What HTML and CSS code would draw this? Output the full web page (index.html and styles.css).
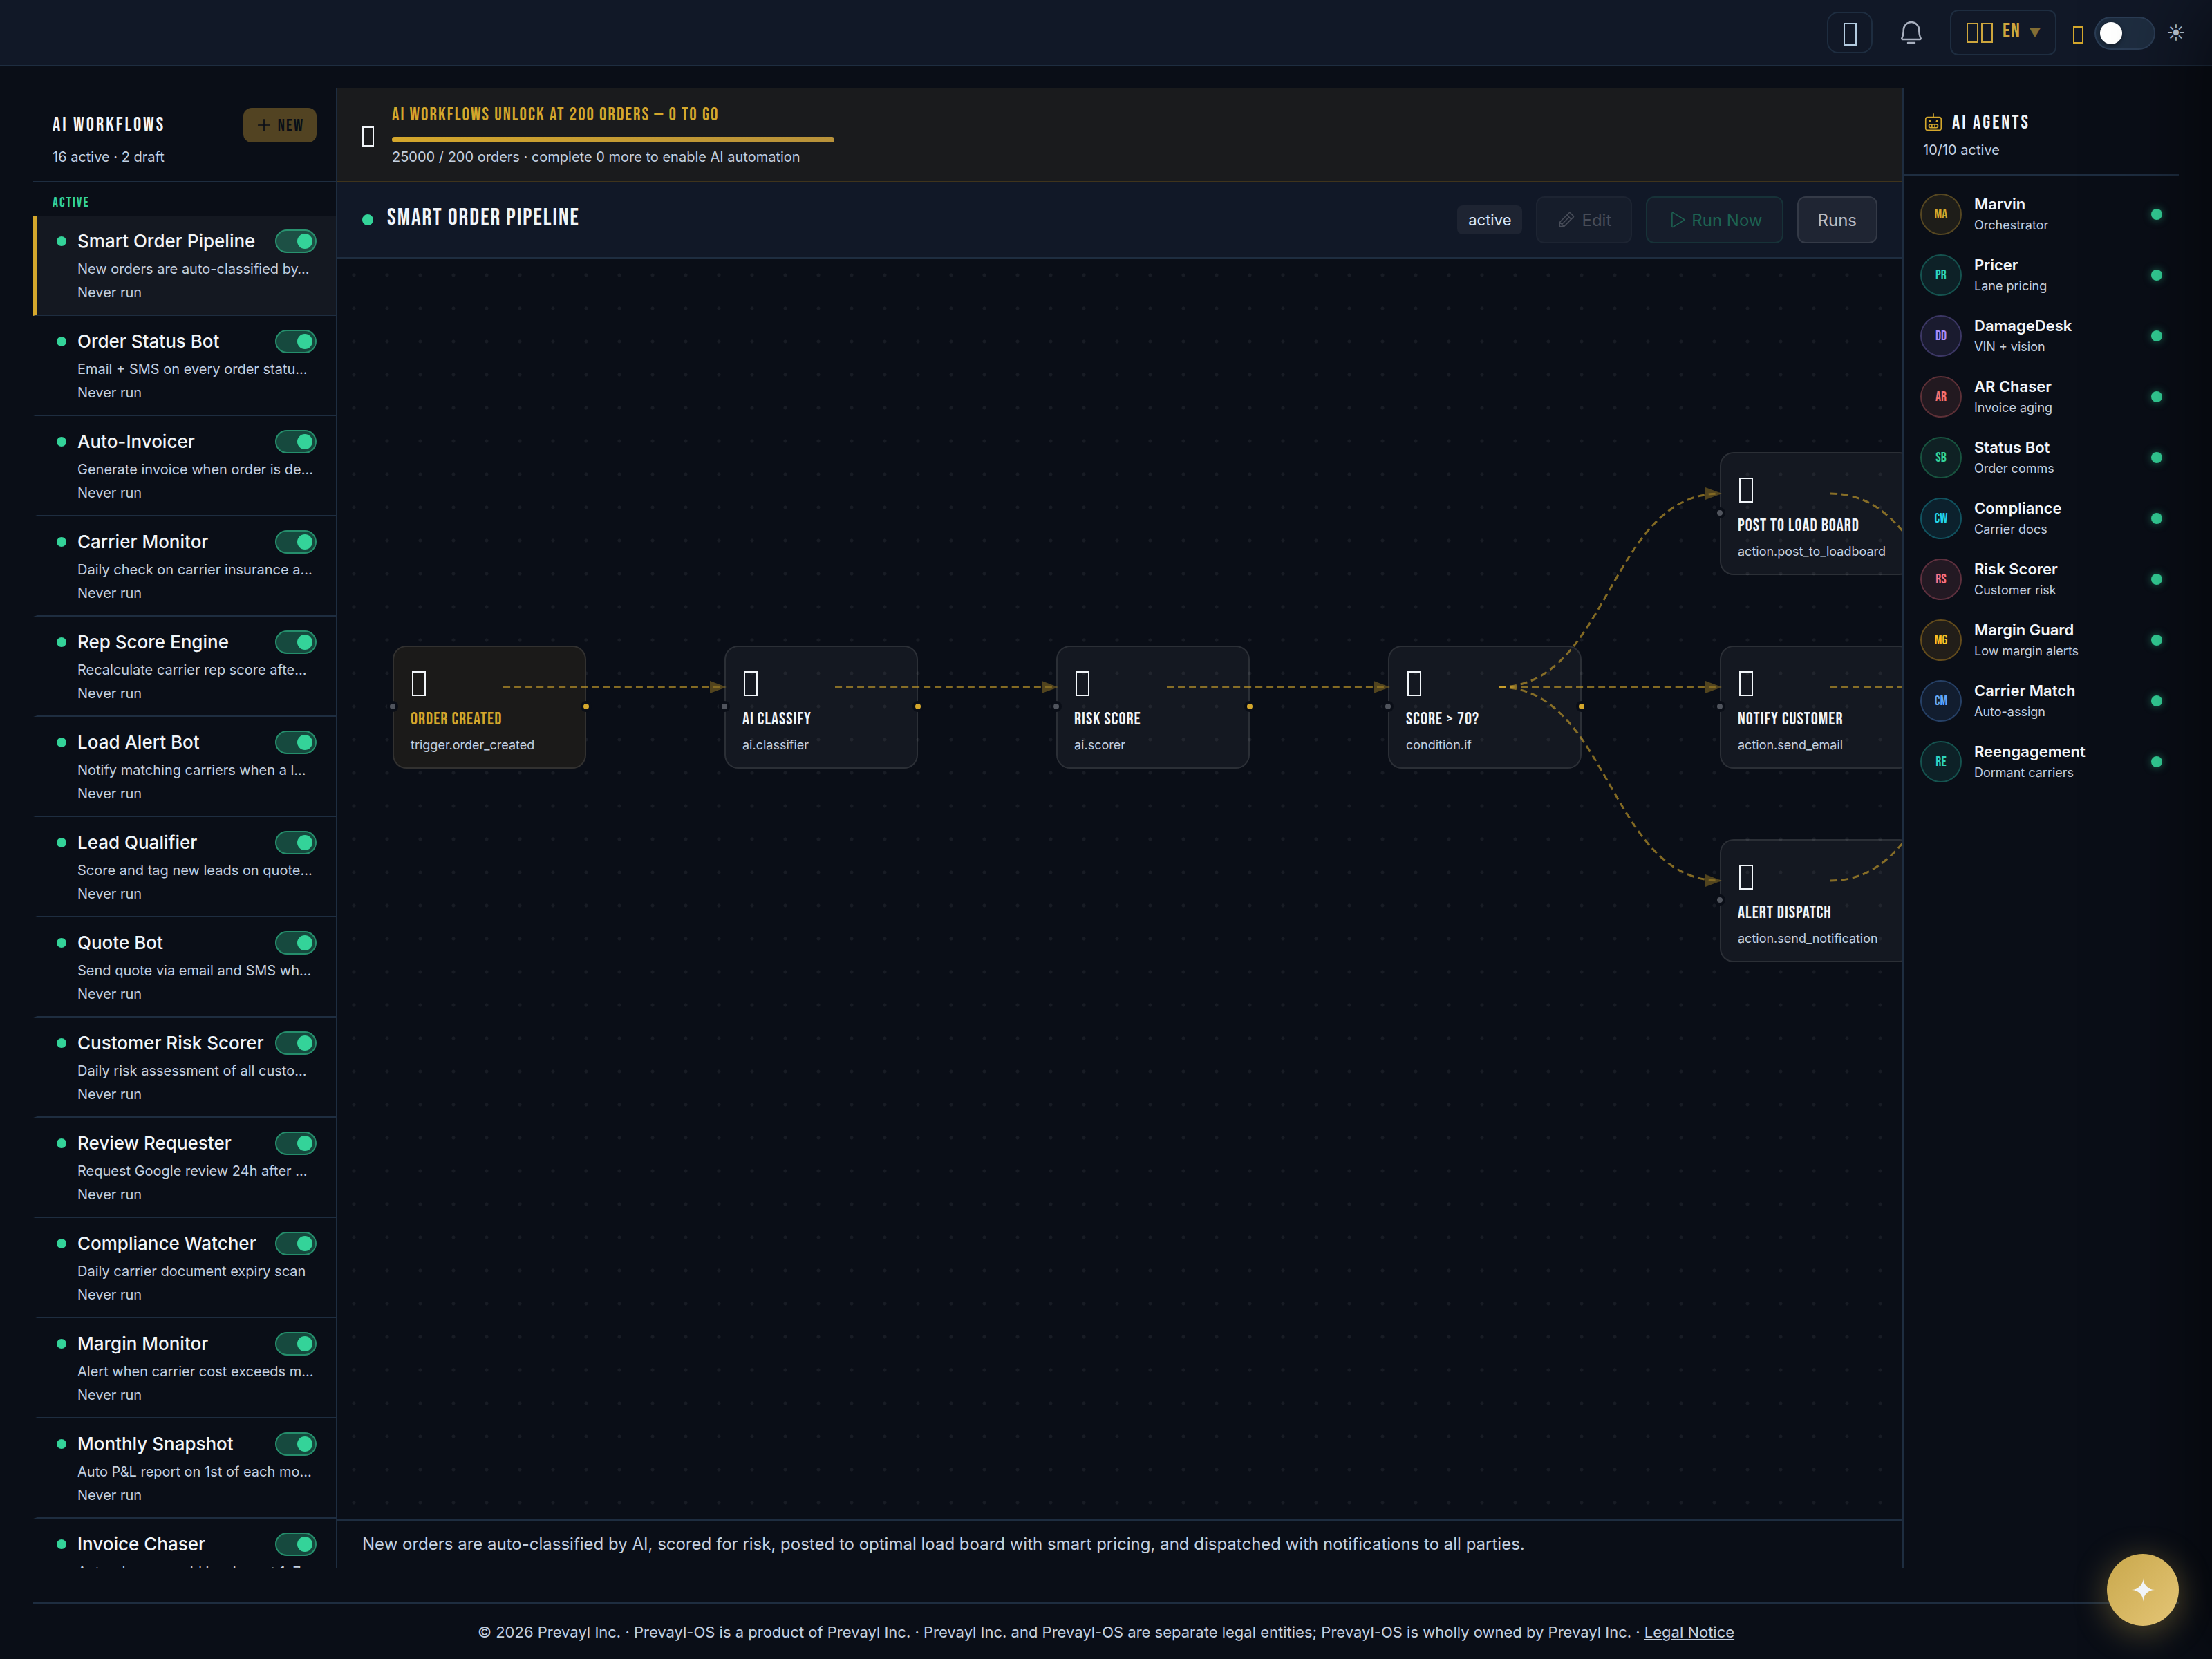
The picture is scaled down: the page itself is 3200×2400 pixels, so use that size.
FILE: index.html
```
<!DOCTYPE html>
<html lang="en">
<head>
<meta charset="UTF-8" />
<meta name="viewport" content="width=device-width, initial-scale=1.0" />
<title>AI Workflows</title>
<link rel="stylesheet" href="styles.css">
</head>
<body>

<header class="topbar">
<button class="icon-btn framed" aria-label="Messages"><span class="glyph glyph-lg"></span></button>
<button class="icon-btn bell" aria-label="Notifications">
<svg width="40" height="40" viewBox="0 0 256 256" fill="currentColor"><path d="M168,224a8,8,0,0,1-8,8H96a8,8,0,1,1,0-16h64A8,8,0,0,1,168,224Zm53.85-32A15.8,15.8,0,0,1,208,200H48a16,16,0,0,1-13.8-24.06C39.75,166.38,48,139.34,48,104a80,80,0,1,1,160,0c0,35.33,8.26,62.38,13.81,71.94A15.89,15.89,0,0,1,221.84,192ZM208,184c-7.73-13.27-16-43.95-16-80a64,64,0,1,0-128,0c0,36.06-8.28,66.74-16,80Z"/></svg>
</button>
<button class="lang">
<span class="flag"><span class="glyph"></span><span class="glyph"></span></span>
<span class="lang-code">EN</span>
<span class="caret">▼</span>
</button>
<label class="theme">
<span class="glyph glyph-sm"></span>
<input type="checkbox" class="theme-switch" aria-label="Light theme">
<span class="sun">☀</span>
</label>
</header>

<main class="shell">

<aside class="flows">
<div class="flows-head">
<div class="flows-title">
<h2>AI Workflows</h2>
<button class="btn-new" disabled>
<svg width="24" height="24" viewBox="0 0 256 256" fill="none" stroke="currentColor" stroke-width="18" stroke-linecap="round"><path d="M40 128H216M128 40V216"/></svg>
New
</button>
</div>
<p class="sub">16 active · 2 draft</p>
</div>
<div class="group-label">Active</div>
<ul class="flow-list">
<li class="flow selected">
<div class="flow-row"><i class="dot"></i><label for="f1">Smart Order Pipeline</label><input type="checkbox" class="switch" id="f1" checked></div>
<p class="desc">New orders are auto-classified by…</p>
<p class="last">Never run</p>
</li>
<li class="flow">
<div class="flow-row"><i class="dot"></i><label for="f2">Order Status Bot</label><input type="checkbox" class="switch" id="f2" checked></div>
<p class="desc">Email + SMS on every order statu…</p>
<p class="last">Never run</p>
</li>
<li class="flow">
<div class="flow-row"><i class="dot"></i><label for="f3">Auto-Invoicer</label><input type="checkbox" class="switch" id="f3" checked></div>
<p class="desc">Generate invoice when order is de…</p>
<p class="last">Never run</p>
</li>
<li class="flow">
<div class="flow-row"><i class="dot"></i><label for="f4">Carrier Monitor</label><input type="checkbox" class="switch" id="f4" checked></div>
<p class="desc">Daily check on carrier insurance a…</p>
<p class="last">Never run</p>
</li>
<li class="flow">
<div class="flow-row"><i class="dot"></i><label for="f5">Rep Score Engine</label><input type="checkbox" class="switch" id="f5" checked></div>
<p class="desc">Recalculate carrier rep score afte…</p>
<p class="last">Never run</p>
</li>
<li class="flow">
<div class="flow-row"><i class="dot"></i><label for="f6">Load Alert Bot</label><input type="checkbox" class="switch" id="f6" checked></div>
<p class="desc">Notify matching carriers when a l…</p>
<p class="last">Never run</p>
</li>
<li class="flow">
<div class="flow-row"><i class="dot"></i><label for="f7">Lead Qualifier</label><input type="checkbox" class="switch" id="f7" checked></div>
<p class="desc">Score and tag new leads on quote…</p>
<p class="last">Never run</p>
</li>
<li class="flow">
<div class="flow-row"><i class="dot"></i><label for="f8">Quote Bot</label><input type="checkbox" class="switch" id="f8" checked></div>
<p class="desc">Send quote via email and SMS wh…</p>
<p class="last">Never run</p>
</li>
<li class="flow">
<div class="flow-row"><i class="dot"></i><label for="f9">Customer Risk Scorer</label><input type="checkbox" class="switch" id="f9" checked></div>
<p class="desc">Daily risk assessment of all custo…</p>
<p class="last">Never run</p>
</li>
<li class="flow">
<div class="flow-row"><i class="dot"></i><label for="f10">Review Requester</label><input type="checkbox" class="switch" id="f10" checked></div>
<p class="desc">Request Google review 24h after …</p>
<p class="last">Never run</p>
</li>
<li class="flow">
<div class="flow-row"><i class="dot"></i><label for="f11">Compliance Watcher</label><input type="checkbox" class="switch" id="f11" checked></div>
<p class="desc">Daily carrier document expiry scan</p>
<p class="last">Never run</p>
</li>
<li class="flow">
<div class="flow-row"><i class="dot"></i><label for="f12">Margin Monitor</label><input type="checkbox" class="switch" id="f12" checked></div>
<p class="desc">Alert when carrier cost exceeds m…</p>
<p class="last">Never run</p>
</li>
<li class="flow">
<div class="flow-row"><i class="dot"></i><label for="f13">Monthly Snapshot</label><input type="checkbox" class="switch" id="f13" checked></div>
<p class="desc">Auto P&amp;L report on 1st of each mo…</p>
<p class="last">Never run</p>
</li>
<li class="flow">
<div class="flow-row"><i class="dot"></i><label for="f14">Invoice Chaser</label><input type="checkbox" class="switch" id="f14" checked></div>
<p class="desc">Auto-chase unpaid invoices at 1, 7…</p>
<p class="last">Never run</p>
</li>
</ul>
</aside>

<section class="center">
<div class="unlock">
<span class="glyph"></span>
<div class="unlock-body">
<h3>AI Workflows unlock at 200 orders — 0 to go</h3>
<div class="bar"><div class="bar-fill"></div></div>
<p class="sub">25000 / 200 orders · complete 0 more to enable AI automation</p>
</div>
</div>

<div class="toolbar">
<i class="dot dot-lg"></i>
<h1>Smart Order Pipeline</h1>
<span class="badge">active</span>
<button class="btn" disabled>
<svg width="28" height="28" viewBox="0 0 256 256" fill="none" stroke="currentColor" stroke-width="14" stroke-linecap="round" stroke-linejoin="round"><path d="M92.7 216H48a8 8 0 0 1-8-8V163.3a8 8 0 0 1 2.3-5.6L165.7 34.3a8 8 0 0 1 11.3 0L221.7 79a8 8 0 0 1 0 11.3L98.3 213.7A8 8 0 0 1 92.7 216ZM136 64l56 56M164 92L68 188M95.5 215.5L40.5 160.5"/></svg>
Edit
</button>
<button class="btn btn-run" disabled>
<svg width="28" height="28" viewBox="0 0 256 256" fill="none" stroke="currentColor" stroke-width="14" stroke-linejoin="round"><path d="M72 39.9V216.1a8 8 0 0 0 12.2 6.7l144-88.1a7.8 7.8 0 0 0 0-13.4L84.2 33.2A8 8 0 0 0 72 39.9Z"/></svg>
Run Now
</button>
<button class="btn">Runs</button>
</div>

<div class="canvas">
<svg class="wires" width="2800" height="1200" viewBox="0 0 2800 1200">
<defs>
<marker id="arrow" markerWidth="8" markerHeight="6" refX="7" refY="3" orient="auto"><path d="M0 0L8 3L0 6Z"/></marker>
</defs>
<path class="wire" d="M240 620C400 620 400 620 560 620"/>
<path class="wire" d="M720 620C880 620 880 620 1040 620"/>
<path class="wire" d="M1200 620C1360 620 1360 620 1520 620"/>
<path class="wire" d="M1680 620C1840 620 1840 340 2000 340"/>
<path class="wire" d="M1680 620C1840 620 1840 620 2000 620"/>
<path class="wire" d="M1680 620C1840 620 1840 900 2000 900"/>
<path class="wire" d="M2160 340C2320 340 2320 620 2480 620"/>
<path class="wire" d="M2160 620C2320 620 2320 620 2480 620"/>
<path class="wire" d="M2160 900C2320 900 2320 620 2480 620"/>
</svg>
<div class="node trigger n1"><span class="glyph glyph-node"></span><h4>Order Created</h4><p>trigger.order_created</p></div>
<div class="node n2"><span class="glyph glyph-node"></span><h4>AI Classify</h4><p>ai.classifier</p></div>
<div class="node n3"><span class="glyph glyph-node"></span><h4>Risk Score</h4><p>ai.scorer</p></div>
<div class="node n4"><span class="glyph glyph-node"></span><h4>Score &gt; 70?</h4><p>condition.if</p></div>
<div class="node n5"><span class="glyph glyph-node"></span><h4>Post to Load Board</h4><p>action.post_to_loadboard</p></div>
<div class="node n6"><span class="glyph glyph-node"></span><h4>Notify Customer</h4><p>action.send_email</p></div>
<div class="node n7"><span class="glyph glyph-node"></span><h4>Alert Dispatch</h4><p>action.send_notification</p></div>
</div>

<p class="summary">New orders are auto-classified by AI, scored for risk, posted to optimal load board with smart pricing, and dispatched with notifications to all parties.</p>
</section>

<aside class="agents">
<div class="agents-head">
<h2>
<svg width="30" height="30" viewBox="0 0 256 256" fill="none" stroke="#d4a72c" stroke-width="14"><rect x="32" y="56" width="192" height="160" rx="24"/><rect x="72" y="144" width="112" height="42" rx="21"/><path d="M128 56V10M110 144V186M146 144V186"/><circle cx="84" cy="106" r="7"/><circle cx="172" cy="106" r="7"/></svg>
AI Agents
</h2>
<p class="sub">10/10 active</p>
</div>
<ul class="agent-list">
<li class="agent"><span class="avatar gold">MA</span><div class="who"><b>Marvin</b><span>Orchestrator</span></div><i class="dot live"></i></li>
<li class="agent"><span class="avatar teal">PR</span><div class="who"><b>Pricer</b><span>Lane pricing</span></div><i class="dot live"></i></li>
<li class="agent"><span class="avatar violet">DD</span><div class="who"><b>DamageDesk</b><span>VIN + vision</span></div><i class="dot live"></i></li>
<li class="agent"><span class="avatar red">AR</span><div class="who"><b>AR Chaser</b><span>Invoice aging</span></div><i class="dot live"></i></li>
<li class="agent"><span class="avatar green">SB</span><div class="who"><b>Status Bot</b><span>Order comms</span></div><i class="dot live"></i></li>
<li class="agent"><span class="avatar cyan">CW</span><div class="who"><b>Compliance</b><span>Carrier docs</span></div><i class="dot live"></i></li>
<li class="agent"><span class="avatar rose">RS</span><div class="who"><b>Risk Scorer</b><span>Customer risk</span></div><i class="dot live"></i></li>
<li class="agent"><span class="avatar amber">MG</span><div class="who"><b>Margin Guard</b><span>Low margin alerts</span></div><i class="dot live"></i></li>
<li class="agent"><span class="avatar blue">CM</span><div class="who"><b>Carrier Match</b><span>Auto-assign</span></div><i class="dot live"></i></li>
<li class="agent"><span class="avatar teal">RE</span><div class="who"><b>Reengagement</b><span>Dormant carriers</span></div><i class="dot live"></i></li>
</ul>
</aside>

</main>

<footer class="footer">© 2026 Prevayl Inc. · Prevayl-OS is a product of Prevayl Inc. · Prevayl Inc. and Prevayl-OS are separate legal entities; Prevayl-OS is wholly owned by Prevayl Inc. · <a href="#">Legal Notice</a></footer>

<div class="drawer"></div>
<button class="fab" aria-label="Assistant">✦</button>

</body>
</html>
```
FILE: styles.css
```
:root {
--bg: #0a0e17;
--panel: #111827;
--line: #1e2d40;
--gold: #d4a72c;
--green: #34d399;
--text: #f1f5f9;
--muted: #c3d0e0;
--display: 'Bebas Neue', 'Oswald', sans-serif;
}

*, *::before, *::after { box-sizing: border-box; }
* { margin: 0; padding: 0; }

html, body { height: 100%; }

body {
display: flex; flex-direction: column;
overflow: hidden;
background: var(--bg); color: var(--text);
font-family: 'Inter', sans-serif;
font-size: 20px; line-height: 34px;
}

button { font-family: inherit; cursor: pointer; }
ul { list-style: none; }

h1, h2, h3, h4 {
font-family: var(--display);
font-weight: 400; text-transform: uppercase;
}

h2 { font-size: 28px; line-height: 44px; letter-spacing: 3px; }

.sub { color: var(--muted); }

/* empty box glyphs */
.glyph {
display: inline-block; flex: none;
width: 17px; height: 29px;
border: 2px solid currentColor;
}
.glyph-lg { width: 19px; height: 33px; }
.glyph-sm { width: 15px; height: 25px; color: var(--gold); }
.glyph-node { width: 20px; height: 36px; }

.dot {
flex: none;
width: 14px; height: 14px; border-radius: 50%;
background: var(--green);
}
.dot-lg { width: 16px; height: 16px; }

/* top bar */
.topbar {
display: flex; align-items: center; justify-content: flex-end;
gap: 16px; height: 96px; padding: 0 40px; flex: none;
background: var(--panel);
border-bottom: 2px solid var(--line);
}

.icon-btn {
display: flex; align-items: center; justify-content: center;
width: 66px; height: 60px;
background: none; border: none; color: #a9b0bf;
}
.icon-btn.framed {
border: 2px solid var(--line); border-radius: 16px;
color: #b3cbe0; padding-top: 4px;
}
.icon-btn.bell { width: 80px; }

.lang {
display: flex; align-items: center; gap: 14px;
height: 66px; padding: 0 22px;
background: none; color: #cda63d;
border: 2px solid var(--line); border-radius: 12px;
}
.flag { display: flex; gap: 4px; }
.lang-code { font: 30px var(--display); letter-spacing: 1px; margin-bottom: 4px; }
.caret { font-size: 18px; opacity: 0.6; margin: 0 -2px; }

.theme { display: flex; align-items: center; gap: 16px; padding: 2px 0 0 8px; }
.theme .glyph { margin-top: 4px; }

.theme-switch {
appearance: none; display: flex; align-items: center;
width: 88px; height: 48px; padding: 0 6px;
background: var(--line); border: 2px solid #2b3d55; border-radius: 24px;
}
.theme-switch::before {
content: ""; width: 32px; height: 32px; border-radius: 50%;
background: #fff; box-shadow: 0 2px 6px rgba(0,0,0,0.4);
}
.sun { width: 26px; font-size: 26px; color: var(--muted); text-align: center; }

/* page grid */
.shell {
flex: 1; min-height: 0;
display: grid; grid-template-columns: 440px 1fr 400px;
grid-template-rows: 100%;
margin: 32px 48px 50px;
}

/* left list */
.flows {
display: flex; flex-direction: column;
border-right: 2px solid var(--line); overflow: hidden;
}
.flows-head { padding: 28px 28px 18px; border-bottom: 2px solid var(--line); }
.flows-title { display: flex; align-items: center; justify-content: space-between; margin-bottom: 4px; }

.btn-new {
display: flex; align-items: center; gap: 8px;
height: 50px; padding: 0 18px;
font: 24px var(--display); letter-spacing: 2px; text-transform: uppercase;
color: var(--bg); background: #524322;
border: none; border-radius: 12px;
}

.group-label {
height: 48px; padding: 0 28px; flex: none;
font: 20px/58px var(--display); letter-spacing: 2px; text-transform: uppercase;
color: var(--green);
}

.flow {
height: 145px; padding: 20px 28px 0;
border-left: 6px solid transparent;
border-bottom: 2px solid var(--line);
}
.flow.selected { background: #141821; border-left-color: var(--gold); }
.flow-row { display: flex; align-items: center; gap: 16px; margin-bottom: 6px; }
.flow-row label { flex: 1; font-size: 26px; font-weight: 500; white-space: nowrap; }
.desc, .last { padding-left: 30px; color: var(--muted); }
.desc { white-space: nowrap; }

.switch {
appearance: none; flex: none;
display: flex; align-items: center; justify-content: flex-end;
width: 60px; height: 34px; padding: 0 4px;
background: rgba(52,211,153,0.3);
border: 2px solid rgba(52,211,153,0.5); border-radius: 17px;
}
.switch::before {
content: ""; width: 22px; height: 22px; border-radius: 50%;
background: var(--green);
}

/* center */
.center { display: flex; flex-direction: column; min-width: 0; }

.unlock {
display: flex; align-items: center; gap: 26px;
padding: 16px 36px 18px;
background: #1a1b1d; border-bottom: 2px solid #3f341c;
}
.unlock .glyph { margin-top: 6px; }
.unlock h3 { font-size: 26px; line-height: 46px; letter-spacing: 2px; color: var(--gold); }
.bar { width: 640px; margin: 8px 0 4px; height: 8px; border-radius: 4px; background: #2b2c2f; }
.bar-fill { width: 100%; height: 8px; border-radius: 4px; background: linear-gradient(90deg, #d4a72c, #b8923a); }

.toolbar {
display: flex; align-items: center; gap: 20px;
padding: 20px 36px;
background: var(--panel); border-bottom: 2px solid var(--line);
}
.toolbar h1 { flex: 1; padding-bottom: 6px; font-size: 34px; line-height: 56px; letter-spacing: 2px; }

.badge { padding: 4px 16px; background: #1e2432; border-radius: 8px; font-size: 22px; color: #dbeafe; }

.btn {
display: flex; align-items: center; gap: 8px;
height: 68px; padding: 0 28px;
font-size: 24px; color: #b9bcc3;
background: #1f2533; border: 2px solid #343a47; border-radius: 12px;
}
.btn:disabled { color: #484d59; background: #161d2b; border-color: #1d2432; }
.btn-run:disabled { color: #1d6252; border-color: #173238; }

.canvas {
position: relative; flex: 1; overflow: hidden;
background-image: radial-gradient(circle, rgba(255,255,255,0.06) 2px, transparent 3px);
background-size: 48px 48px;
}

.wires { position: absolute; top: 0; left: 0; z-index: 1; }
.wire {
fill: none; stroke: var(--gold); stroke-width: 3;
stroke-dasharray: 10 6; opacity: 0.6;
marker-end: url(#arrow);
}
.wires marker path { fill: rgba(212,167,44,0.6); }

.node {
position: absolute;
width: 280px; height: 178px; padding: 35px 24px 0;
background: rgba(255,255,255,0.045);
border: 2px solid rgba(255,255,255,0.1); border-radius: 20px;
}
.node .glyph { display: block; margin: 0 2px 16px; }
.node h4 { font-size: 25px; line-height: 36px; letter-spacing: 1px; white-space: nowrap; }
.node p { font-size: 18px; line-height: 38px; color: var(--muted); }
.node.trigger { background: #1b1a19; }
.node.trigger h4 { color: var(--gold); }

/* connection ports */
.node::before, .node::after {
content: ""; position: absolute; top: 78px;
width: 16px; height: 16px; border-radius: 50%;
border: 4px solid var(--bg);
}
.node::before { left: -10px; background: #50545d; }
.node::after { right: -10px; background: var(--gold); }

.n1 { left: 80px; top: 560px; }
.n2 { left: 560px; top: 560px; }
.n3 { left: 1040px; top: 560px; }
.n4 { left: 1520px; top: 560px; }
.n5 { left: 2000px; top: 280px; }
.n6 { left: 2000px; top: 560px; }
.n7 { left: 2000px; top: 840px; }

.summary {
padding: 17px 36px;
border-top: 2px solid var(--line);
font-size: 24px; color: var(--muted);
}

/* right list */
.agents { border-left: 2px solid var(--line); }
.agents-head { padding: 28px 28px 18px; border-bottom: 2px solid var(--line); }
.agents-head h2 { display: flex; align-items: center; gap: 12px; }
.agent-list { padding: 12px 0; }

.agent { display: flex; align-items: center; gap: 18px; height: 88px; padding: 0 24px; }
.avatar {
display: flex; align-items: center; justify-content: center;
width: 60px; height: 60px; border-radius: 50%;
font: 20px var(--display);
border: 2px solid;
}
.gold { color: #d4a72c; background: #1e1d19; border-color: #564721; }
.teal { color: #2dd4bf; background: #0d2127; border-color: #15534f; }
.violet { color: #a78bfa; background: #1a1b2f; border-color: #3c3765; }
.red { color: #f87171; background: #221920; border-color: #5d3037; }
.green { color: #34d399; background: #0f2124; border-color: #18533f; }
.cyan { color: #22d3ee; background: #0c212d; border-color: #11525f; }
.rose { color: #fb7185; background: #231923; border-color: #5e303e; }
.amber { color: #fbbf24; background: #221e19; border-color: #644c1c; }
.blue { color: #60a5fa; background: #121d2f; border-color: #264066; }

.who { flex: 1; display: flex; flex-direction: column; padding-top: 2px; line-height: 30px; }
.who b { font-size: 22px; font-weight: 600; }
.who span { font-size: 18px; line-height: 32px; color: var(--muted); }
.live { width: 16px; height: 16px; box-shadow: 0 0 12px rgba(52,211,153,0.5); }

.footer {
margin: 0 48px; padding: 24px 0 22px;
border-top: 2px solid var(--line);
font-size: 22px; color: var(--muted); text-align: center;
}
.footer a { color: inherit; }

/* closed side drawer, only its shadow is seen */
.drawer {
position: fixed; top: 0; bottom: 0; left: 100%; width: 400px;
box-shadow: -16px 0 120px rgba(0,0,0,0.6);
pointer-events: none;
}

.fab {
position: fixed; right: 48px; bottom: 48px;
width: 104px; height: 104px; border-radius: 50%; border: none;
font-size: 44px; color: var(--text);
background: linear-gradient(135deg, #c9a84c, #e4c576);
box-shadow: 0 8px 48px rgba(201,168,76,0.4);
}
```
